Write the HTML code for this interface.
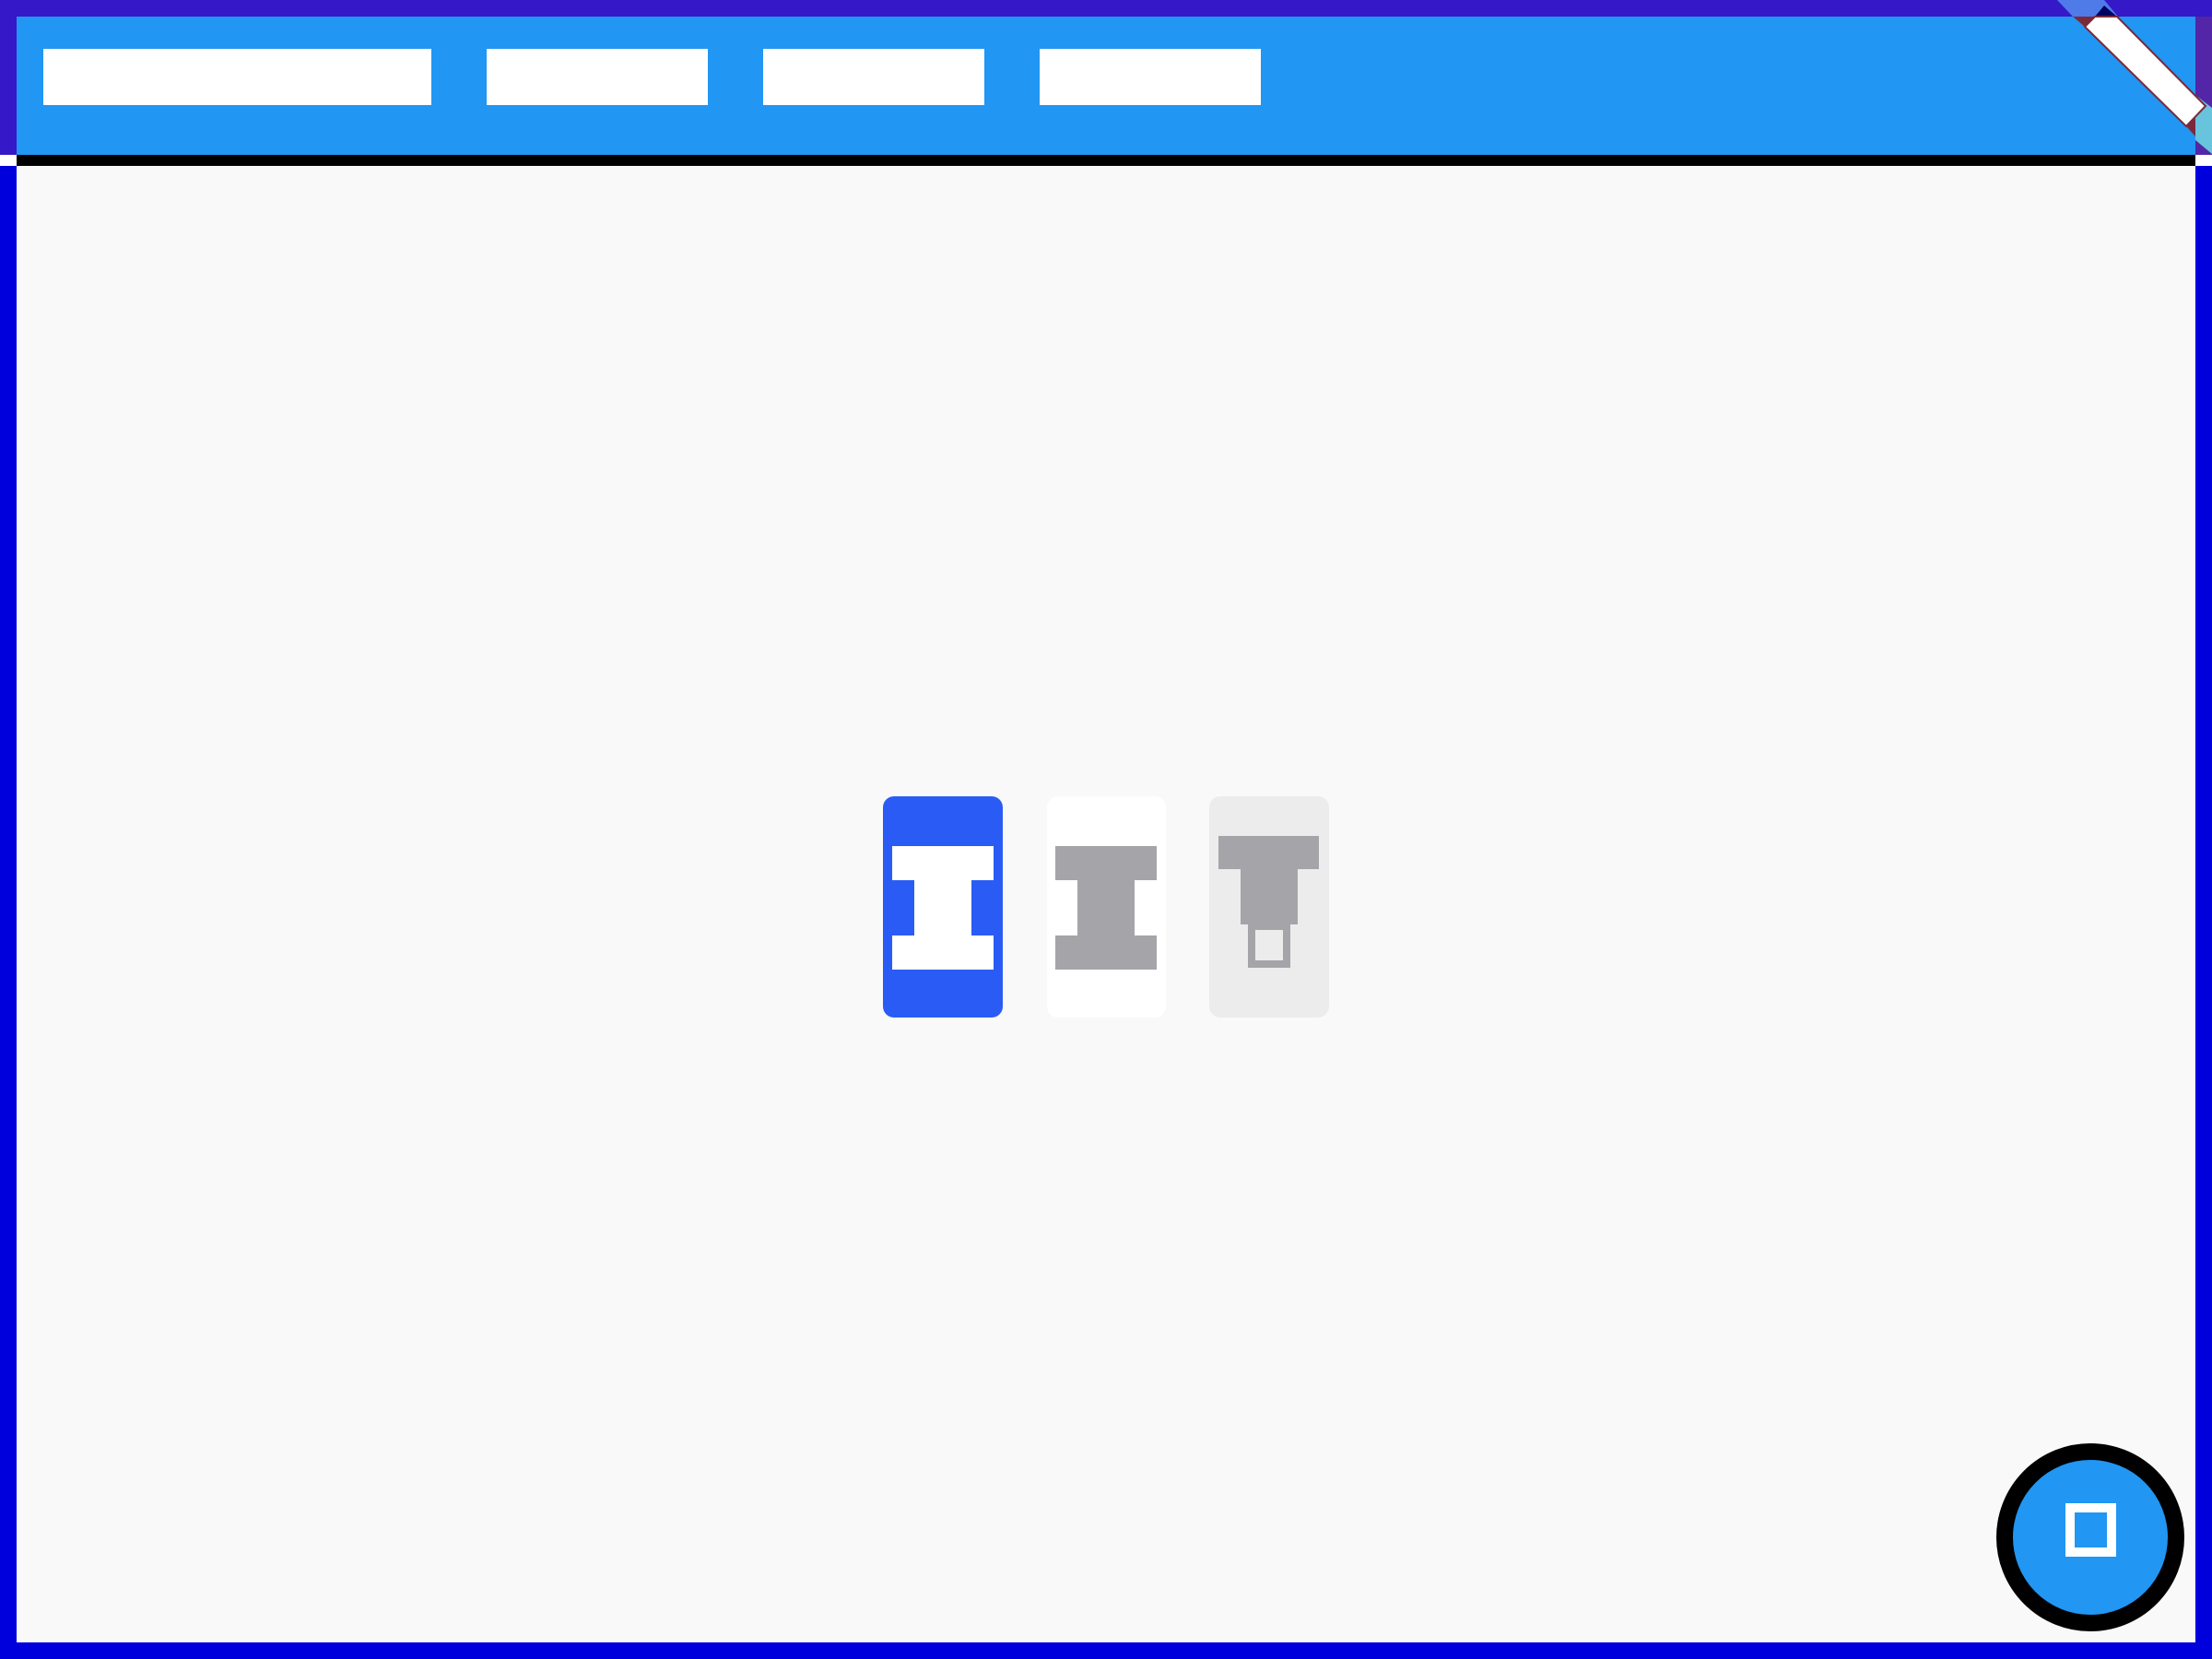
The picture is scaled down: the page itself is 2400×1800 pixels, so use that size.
<!DOCTYPE html>
<html><head><meta charset="utf-8"><style>
html,body{margin:0;padding:0;}
body{width:2400px;height:1800px;position:relative;overflow:hidden;background:#f9f9f9;font-family:"Liberation Sans",sans-serif;}
.a{position:absolute;box-sizing:border-box;}
</style></head><body>
<div class="a" style="left:0;top:0;width:2400px;height:18px;background:#3518c8"></div>
<div class="a" style="left:0;top:18px;width:18px;height:150px;background:#3518c8"></div>
<div class="a" style="left:2382px;top:18px;width:18px;height:150px;background:#5226a6"></div>
<div class="a" style="left:18px;top:18px;width:2364px;height:150px;background:#2196f3"></div>
<div class="a" style="left:0;top:168px;width:18px;height:12px;background:#fff"></div>
<div class="a" style="left:2382px;top:168px;width:18px;height:12px;background:#fff"></div>
<div class="a" style="left:18px;top:168px;width:2364px;height:12px;background:#000"></div>
<div class="a" style="left:0;top:180px;width:18px;height:1620px;background:#0000dd"></div>
<div class="a" style="left:2382px;top:180px;width:18px;height:1620px;background:#0000dd"></div>
<div class="a" style="left:0;top:1782px;width:2400px;height:18px;background:#0000dd"></div>
<div class="a" style="left:47px;top:53px;width:421px;height:61px;background:#fff"></div>
<div class="a" style="left:528px;top:53px;width:240px;height:61px;background:#fff"></div>
<div class="a" style="left:828px;top:53px;width:240px;height:61px;background:#fff"></div>
<div class="a" style="left:1128px;top:53px;width:240px;height:61px;background:#fff"></div>
<svg class="a" style="left:0;top:0" width="2400" height="200">
<polygon points="2232,0 2283,0 2298,18 2249,18" fill="#4f7be8"/>
<polygon points="2273,18 2283,6 2297,18" fill="#000060"/>
<polygon points="2249,18 2273,18 2262,29" fill="#7a2a3a"/>
<polygon points="2382,103 2400,117 2400,167 2382,152" fill="#68c4dc"/>
<polygon points="2262,29 2273,18 2297,18 2393,115 2372,137" fill="#fff" stroke="#7a2a3a" stroke-width="2"/>
<polygon points="2372,137 2382,128 2382,148" fill="#7a2a3a"/>
</svg>
<div class="a" style="left:958px;top:864px;width:130px;height:240px;background:#2a5cf5;border-radius:12px"></div>
<div class="a" style="left:1136px;top:864px;width:129px;height:240px;background:#fff;border-radius:12px"></div>
<div class="a" style="left:1312px;top:864px;width:130px;height:240px;background:#ececec;border-radius:12px"></div>
<svg class="a" style="left:0;top:0" width="2400" height="1200">
<polygon points="968,918 1078,918 1078,955 1054,955 1054,1015 1078,1015 1078,1052 968,1052 968,1015 992,1015 992,955 968,955" fill="#fff"/>
<polygon points="1145,918 1255,918 1255,955 1231,955 1231,1015 1255,1015 1255,1052 1145,1052 1145,1015 1169,1015 1169,955 1145,955" fill="#a5a4a8"/>
<polygon points="1322,907 1431,907 1431,943 1408,943 1408,1003 1400,1003 1400,1050 1354,1050 1354,1003 1346,1003 1346,943 1322,943" fill="#a5a4a8"/>
<rect x="1362" y="1009" width="30" height="33" fill="#ececec"/>
</svg>
<div class="a" style="left:2166px;top:1566px;width:204px;height:204px;border-radius:50%;background:#2196f3;border:18px solid #000"></div>
<div class="a" style="left:2241px;top:1631px;width:55px;height:58px;border:10px solid #fff"></div>
</body></html>
